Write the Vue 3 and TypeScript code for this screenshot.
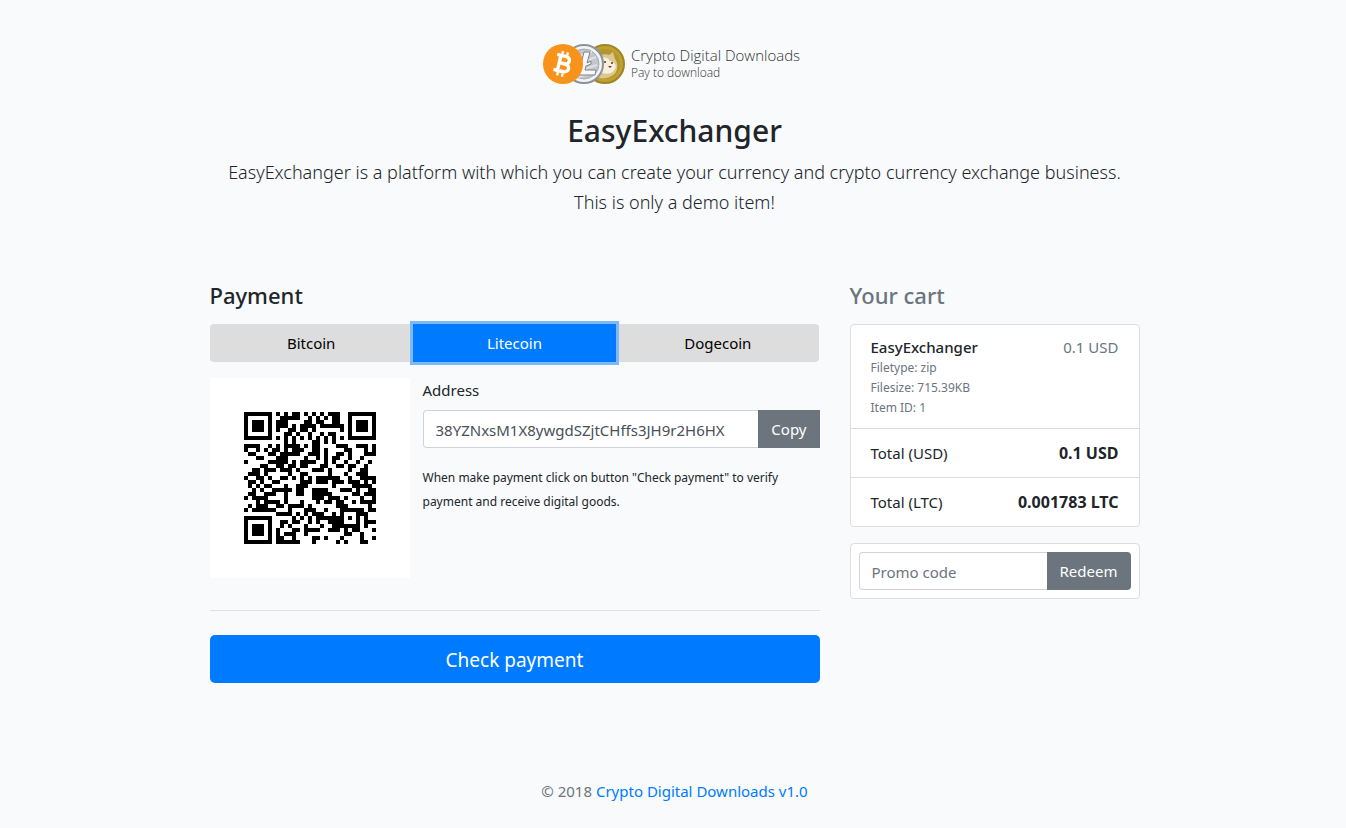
<script setup lang="ts">
import { ref, computed } from 'vue'

type Coin = { name: string; code: string; scheme: string; address: string; amount: string }

const coins: Coin[] = [
  { name: 'Bitcoin', code: 'BTC', scheme: 'bitcoin', address: '38YZNxsM1X8ywgdSZjtCHffs3JH9r2H6HX', amount: '0.000015' },
  { name: 'Litecoin', code: 'LTC', scheme: 'litecoin', address: '38YZNxsM1X8ywgdSZjtCHffs3JH9r2H6HX', amount: '0.001783' },
  { name: 'Dogecoin', code: 'DOGE', scheme: 'dogecoin', address: '38YZNxsM1X8ywgdSZjtCHffs3JH9r2H6HX', amount: '38.46' },
]
const selected = ref(1)
const coin = computed(() => coins[selected.value])
const promo = ref('')

const SIZE = 33
const DATA_WORDS = 80
const ECC_WORDS = 20

/* Multiplication in GF(256) as used by the QR error correction code */
function mul(a: number, b: number): number {
  let z = 0
  for (let i = 7; i >= 0; i--) {
    z = (z << 1) ^ ((z >> 7) * 0x11d)
    z ^= ((b >> i) & 1) * a
  }
  return z
}

function codewords(text: string): number[] {
  const bits: number[] = []
  const push = (v: number, n: number) => {
    for (let i = n - 1; i >= 0; i--) bits.push((v >> i) & 1)
  }
  push(4, 4)
  push(text.length, 8)
  for (const ch of text) push(ch.charCodeAt(0), 8)
  push(0, 4)
  const data: number[] = []
  for (let i = 0; i < bits.length; i += 8) data.push(parseInt(bits.slice(i, i + 8).join(''), 2))
  for (let pad = 0xec; data.length < DATA_WORDS; pad ^= 0xec ^ 0x11) data.push(pad)

  const gen = new Array<number>(ECC_WORDS).fill(0)
  gen[ECC_WORDS - 1] = 1
  let root = 1
  for (let i = 0; i < ECC_WORDS; i++) {
    for (let j = 0; j < ECC_WORDS; j++) {
      gen[j] = mul(gen[j], root)
      if (j + 1 < ECC_WORDS) gen[j] ^= gen[j + 1]
    }
    root = mul(root, 2)
  }
  const ecc = new Array<number>(ECC_WORDS).fill(0)
  for (const b of data) {
    const f = b ^ (ecc.shift() as number)
    ecc.push(0)
    gen.forEach((g, i) => { ecc[i] ^= mul(g, f) })
  }
  return data.concat(ecc)
}

/* QR version 4, error correction level L, mask 3 */
function encodeQr(text: string): boolean[][] {
  const words = codewords(text)
  const blank = () => Array.from({ length: SIZE }, () => new Array<boolean>(SIZE).fill(false))
  const grid = blank()
  const fixed = blank()
  const set = (r: number, c: number, v: boolean) => { grid[r][c] = v; fixed[r][c] = true }

  for (let i = 0; i < SIZE; i++) { set(6, i, i % 2 === 0); set(i, 6, i % 2 === 0) }
  for (const [cr, cc] of [[3, 3], [3, SIZE - 4], [SIZE - 4, 3]]) {
    for (let dr = -4; dr <= 4; dr++) {
      for (let dc = -4; dc <= 4; dc++) {
        const r = cr + dr
        const c = cc + dc
        const d = Math.max(Math.abs(dr), Math.abs(dc))
        if (r >= 0 && r < SIZE && c >= 0 && c < SIZE) set(r, c, d !== 2 && d !== 4)
      }
    }
  }
  for (let dr = -2; dr <= 2; dr++) {
    for (let dc = -2; dc <= 2; dc++) set(26 + dr, 26 + dc, Math.max(Math.abs(dr), Math.abs(dc)) !== 1)
  }

  const fb = (i: number) => ((0b111100010011101 >> i) & 1) === 1
  for (let i = 0; i <= 5; i++) set(i, 8, fb(i))
  set(7, 8, fb(6)); set(8, 8, fb(7)); set(8, 7, fb(8))
  for (let i = 9; i < 15; i++) set(8, 14 - i, fb(i))
  for (let i = 0; i < 8; i++) set(8, SIZE - 1 - i, fb(i))
  for (let i = 8; i < 15; i++) set(SIZE - 15 + i, 8, fb(i))
  set(SIZE - 8, 8, true)

  let k = 0
  for (let right = SIZE - 1; right >= 1; right -= 2) {
    if (right === 6) right = 5
    for (let v = 0; v < SIZE; v++) {
      for (let j = 0; j < 2; j++) {
        const c = right - j
        const r = ((right + 1) & 2) === 0 ? SIZE - 1 - v : v
        if (fixed[r][c]) continue
        const bit = k < words.length * 8 && ((words[k >> 3] >> (7 - (k & 7))) & 1) === 1
        grid[r][c] = bit !== ((r + c) % 3 === 0)
        k++
      }
    }
  }
  return grid
}

const qrPath = computed(() =>
  encodeQr(`${coin.value.scheme}:${coin.value.address}?amount=${coin.value.amount}`)
    .map((row, r) => row.map((on, c) => (on ? `M${c} ${r}h1v1h-1z` : '')).join(''))
    .join(''),
)

function copyAddress() {
  navigator.clipboard?.writeText(coin.value.address)
}
</script>

<template>
  <div class="page">
    <div class="container">
      <header class="intro">
        <div class="brand">
          <svg class="coins" width="82" height="40" viewBox="0 0 82 40" aria-hidden="true">
            <circle cx="62" cy="20" r="19" fill="#c0a02f" stroke="#a08528" stroke-width="2" />
            <circle cx="62" cy="20" r="15" fill="#b3942f" />
            <path d="M53 33c-3-6-3-13 0-18l0-8 5 4c3-1 6-1 8 0l4-3 2 7c3 4 3 9 1 13-4 6-13 8-20 5z" fill="#dcc88f" />
            <path d="M56 17c3-5 9-4 11 0 5 1 7 5 5 8-3 6-12 6-16 2z" fill="#f8f0dc" />
            <circle cx="62" cy="18" r="1" fill="#4b3a1b" />
            <circle cx="69" cy="19" r="1" fill="#4b3a1b" />
            <path d="M65 22h4l-2 2z" fill="#58472a" />
            <circle cx="41" cy="20" r="19" fill="#f2f3f5" stroke="#8d9299" stroke-width="2" />
            <circle cx="41" cy="20" r="15" fill="#c3c6ca" stroke="#a6abb0" />
            <path d="M31 14l18-6M29 22l24-9M30 29l24-8M36 33l17-6" stroke="#dfe1e4" stroke-width="2" />
            <path d="M47 8h-6l-3 12-4 2v3l3-1-2 7h17l1-5H42l1-4 5-2v-3l-4 2z" fill="#f9f9fa" stroke="#7d8288" stroke-width="1" />
            <circle cx="20" cy="20" r="20" fill="#f7931a" />
            <g transform="rotate(14 20 20)" fill="none" stroke="#fff">
              <path d="M12 12H20.500C27 12 27 19 21 19.500H16M21 19.500C29 19.500 28 27.500 21 27.500H12M16 12V27.500" stroke-width="3.400" />
              <path d="M17 7.500V11M22 7.500V11M17 29V32.500M22 29V32.500" stroke-width="2.400" />
            </g>
          </svg>
          <div class="brand-text">
            <span class="brand-name">Crypto Digital Downloads</span>
            <span class="brand-tag">Pay to download</span>
          </div>
        </div>
        <h2>EasyExchanger</h2>
        <p class="lead">
          EasyExchanger is a platform with which you can create your currency and crypto currency exchange business.
          <br />This is only a demo item!
        </p>
      </header>

      <main class="columns">
        <section class="payment">
          <h4>Payment</h4>
          <div class="tabs" role="group" aria-label="Currency">
            <button
              v-for="(c, i) in coins"
              :key="c.code"
              type="button"
              class="tab"
              :class="{ active: i === selected }"
              :aria-pressed="i === selected"
              @click="selected = i"
            >{{ c.name }}</button>
          </div>
          <div class="details">
            <div class="qr">
              <svg viewBox="0 0 33 33" width="132" height="132" shape-rendering="crispEdges" role="img" aria-label="Payment QR code">
                <path :d="qrPath" fill="#000" />
              </svg>
            </div>
            <div class="transfer">
              <label for="address">Address</label>
              <div class="input-group">
                <input id="address" type="text" readonly :value="coin.address" />
                <button type="button" class="addon square" @click="copyAddress">Copy</button>
              </div>
              <p class="hint">When make payment click on button "Check payment" to verify payment and receive digital goods.</p>
            </div>
          </div>
          <hr />
          <button type="button" class="check">Check payment</button>
        </section>

        <aside class="cart">
          <h4 class="muted">Your cart</h4>
          <ul class="list">
            <li class="item">
              <div>
                <h6>EasyExchanger</h6>
                <small>Filetype: zip</small>
                <small>Filesize: 715.39KB</small>
                <small>Item ID: 1</small>
              </div>
              <span class="price muted">0.1 USD</span>
            </li>
            <li><span>Total (USD)</span><strong>0.1 USD</strong></li>
            <li><span>Total ({{ coin.code }})</span><strong>{{ coin.amount }} {{ coin.code }}</strong></li>
          </ul>
          <form class="promo" @submit.prevent>
            <div class="input-group">
              <input v-model="promo" type="text" placeholder="Promo code" aria-label="Promo code" />
              <button type="submit" class="addon">Redeem</button>
            </div>
          </form>
        </aside>
      </main>

      <footer>© 2018 <a href="#">Crypto Digital Downloads v1.0</a></footer>
    </div>
  </div>
</template>

<style>
body { margin: 0; background: #f8fafc; }
</style>

<style scoped>
* { box-sizing: border-box; }
.page {
  min-height: 100vh;
  padding-left: 3px;
  background: #f8fafc;
  color: #212529;
  font-family: "Noto Sans", "Open Sans", sans-serif;
  font-size: 15px;
  line-height: 24px;
}
.container { max-width: 960px; margin: 0 auto; padding: 0 15px; }
button, input { font: inherit; }
button { cursor: pointer; }
.intro { padding: 44px 0 64px; text-align: center; }
.brand { display: flex; justify-content: center; align-items: center; gap: 6px; margin-bottom: 28px; padding-right: 6px; }
.coins { flex: none; }
.brand-text { display: flex; flex-direction: column; text-align: left; color: #333; font-family: "Open Sans", sans-serif; font-weight: 300; }
.brand-name { font-size: 15px; line-height: 17px; }
.brand-tag { font-size: 12px; line-height: 17px; }
h2 { margin: 0 0 7px; font-size: 30px; line-height: 38px; font-weight: 500; }
.lead { margin: 0; font-size: 18px; line-height: 30px; font-weight: 300; }
.columns { display: grid; grid-template-columns: minmax(0, 610fr) minmax(0, 290fr); gap: 30px; align-items: start; }
h4 { margin: 0 0 14px; font-size: 22px; line-height: 29px; font-weight: 500; }
.muted { color: #6c757d; }
.tabs { display: flex; margin-bottom: 16px; }
.tab {
  flex: 1;
  height: 38px;
  padding: 0;
  border: 0;
  background: #ddd;
  color: #000;
}
.tab:first-child { border-radius: 4px 0 0 4px; }
.tab:last-child { border-radius: 0 4px 4px 0; }
.tab.active { position: relative; background: #007bff; color: #fff; box-shadow: 0 0 0 3px #7eb8f5; }
.details { display: flex; gap: 13px; }
.qr { flex: none; display: grid; place-items: center; width: 200px; height: 200px; background: #fff; }
.transfer { flex: 1; min-width: 0; }
label { display: block; margin-bottom: 8px; }
.input-group { display: flex; }
.input-group input {
  flex: 1;
  min-width: 0;
  height: 38px;
  padding: 2px 12px 0;
  border: 1px solid #ced4da;
  border-right: 0;
  border-radius: 4px 0 0 4px;
  background: #fff;
  color: #495057;
  outline: 0;
}
.input-group input::placeholder { color: #6c757d; opacity: 1; }
.addon { padding: 0 13px; border: 0; border-radius: 0 4px 4px 0; background: #6c757d; color: #fff; }
.addon.square { border-radius: 0; }
.hint { margin: 18px 0 0; font-size: 12px; }
hr { margin: 32px 0 24px; border: 0; border-top: 1px solid #dee0e2; }
.check {
  display: block;
  width: 100%;
  height: 48px;
  padding: 2px 0 0;
  border: 0;
  border-radius: 5px;
  background: #007bff;
  color: #fff;
  font-size: 19px;
}
.list { margin: 0 0 16px; padding: 0; border: 1px solid #dcdddf; border-radius: 4px; background: #fff; list-style: none; }
.list li { display: flex; justify-content: space-between; padding: 12px 20px; }
.list li + li { border-top: 1px solid #dcdddf; }
.list .item { padding: 11px 20px 10px; }
.price { line-height: 22px; }
strong { font-size: 16px; }
h6 { margin: 0; font-size: 15px; line-height: 22px; font-weight: 500; }
small { display: block; color: #6c757d; font-size: 12px; line-height: 20px; }
.promo { padding: 8px; border: 1px solid #dcdddf; border-radius: 4px; background: #fff; }
footer { padding: 96px 0 24px; color: #6c757d; text-align: center; }
a { color: #007bff; text-decoration: none; }
</style>
